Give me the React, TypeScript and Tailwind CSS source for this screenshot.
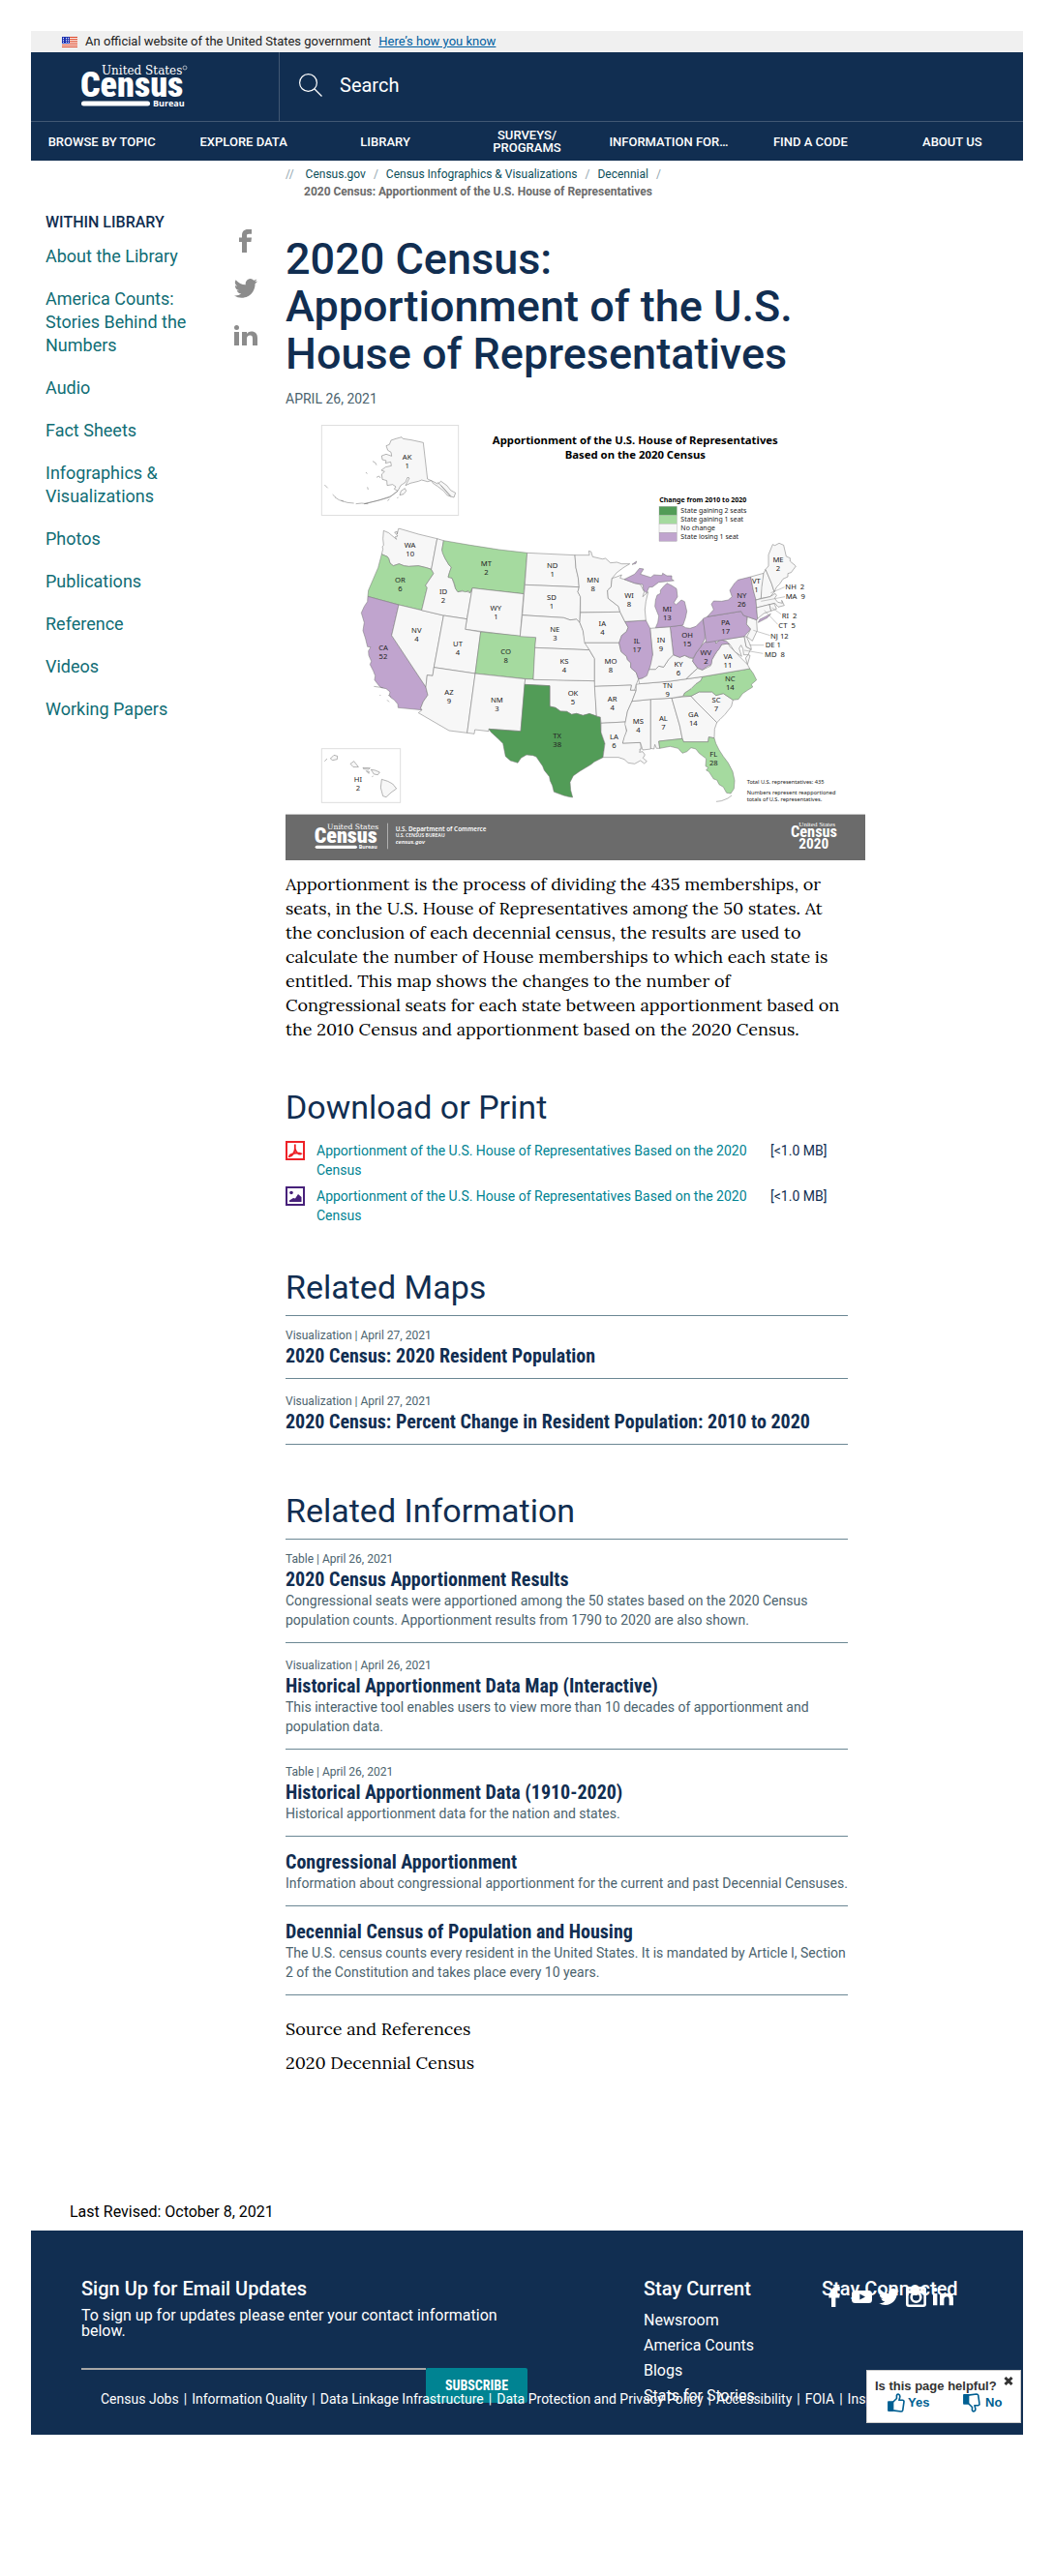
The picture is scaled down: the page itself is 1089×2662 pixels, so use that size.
import type { ReactNode } from "react";

const serif = "font-[Lora,'Liberation_Serif',serif]";
const condensed = "font-['Roboto_Condensed',Roboto,sans-serif]";

const navItems = ["Browse by Topic", "Explore Data", "Library", "Surveys/ Programs", "Information For…", "Find a Code", "About Us"];

const libraryLinks = [
  "About the Library",
  "America Counts: Stories Behind the Numbers",
  "Audio",
  "Fact Sheets",
  "Infographics & Visualizations",
  "Photos",
  "Publications",
  "Reference",
  "Videos",
  "Working Papers",
];

type Entry = { meta?: string; title: string; text?: string };

const relatedMaps: Entry[] = [
  { meta: "Visualization | April 27, 2021", title: "2020 Census: 2020 Resident Population" },
  { meta: "Visualization | April 27, 2021", title: "2020 Census: Percent Change in Resident Population: 2010 to 2020" },
];

const relatedInfo: Entry[] = [
  {
    meta: "Table | April 26, 2021",
    title: "2020 Census Apportionment Results",
    text: "Congressional seats were apportioned among the 50 states based on the 2020 Census population counts. Apportionment results from 1790 to 2020 are also shown.",
  },
  {
    meta: "Visualization | April 26, 2021",
    title: "Historical Apportionment Data Map (Interactive)",
    text: "This interactive tool enables users to view more than 10 decades of apportionment and population data.",
  },
  {
    meta: "Table | April 26, 2021",
    title: "Historical Apportionment Data (1910-2020)",
    text: "Historical apportionment data for the nation and states.",
  },
  {
    title: "Congressional Apportionment",
    text: "Information about congressional apportionment for the current and past Decennial Censuses.",
  },
  {
    title: "Decennial Census of Population and Housing",
    text: "The U.S. census counts every resident in the United States. It is mandated by Article I, Section 2 of the Constitution and takes place every 10 years.",
  },
];

const legalLinks = [
  "Census Jobs",
  "Information Quality",
  "Data Linkage Infrastructure",
  "Data Protection and Privacy Policy",
  "Accessibility",
  "FOIA",
  "Inspector General",
];

function Facebook({ className }: { className: string }) {
  return (
    <svg viewBox="0 0 24 24" className={className} fill="currentColor" aria-hidden="true">
      <path d="M8 24V13H5V8.500h3V6.200C8 2.200 10.300 0 14 0h4v4.800h-2.700C13.200 4.800 13 5.500 13 6.600V8.500h5l-.6 4.500H13v11z" />
    </svg>
  );
}

function Twitter({ className }: { className: string }) {
  return (
    <svg viewBox="0 0 24 24" className={className} fill="currentColor" aria-hidden="true">
      <path d="M24 4.560c-.88.390-1.830.650-2.830.770a4.930 4.930 0 0 0 2.170-2.720c-.95.560-2 .97-3.130 1.190a4.920 4.920 0 0 0-8.390 4.490A13.980 13.980 0 0 1 1.670 3.150a4.920 4.920 0 0 0 1.520 6.570 4.900 4.900 0 0 1-2.230-.61v.06a4.920 4.920 0 0 0 3.950 4.830 4.950 4.950 0 0 1-2.220.08 4.930 4.930 0 0 0 4.600 3.420A9.870 9.870 0 0 1 0 19.540a13.940 13.940 0 0 0 7.550 2.210c9.050 0 14-7.500 14-13.980 0-.21 0-.42-.02-.63A9.940 9.940 0 0 0 24 4.560z" />
    </svg>
  );
}

function LinkedIn({ className }: { className: string }) {
  return (
    <svg viewBox="0 0 24 24" className={className} fill="currentColor" aria-hidden="true">
      <path d="M0 8h5v14H0zM2.500 1a2.500 2.500 0 1 1 0 5 2.500 2.500 0 0 1 0-5zM8 8h5v2c.9-1.500 2.300-2.400 4.700-2.400 4 0 6.300 2.300 6.300 6.800V22h-5v-7c0-2.300-.7-3.400-2.600-3.400C14.200 11.600 13 12.900 13 15.300V22H8z" />
    </svg>
  );
}

function YouTube({ className }: { className: string }) {
  return (
    <svg viewBox="0 0 24 24" className={className} aria-hidden="true">
      <path d="M4 4.500h16q4 0 4 4v7q0 4-4 4H4q-4 0-4-4v-7q0-4 4-4z" fill="currentColor" />
      <path d="M9.500 8.500v7l6.500-3.500z" fill="#112e51" />
    </svg>
  );
}

function Instagram({ className }: { className: string }) {
  return (
    <svg viewBox="0 0 24 24" className={className} fill="none" stroke="currentColor" strokeWidth="3" aria-hidden="true">
      <rect x="1.500" y="1.500" width="21" height="21" rx="2" />
      <circle cx="12" cy="12.500" r="5.500" />
      <path d="M2 6h20" strokeWidth="4" />
    </svg>
  );
}

function Thumb({ className }: { className: string }) {
  return (
    <svg viewBox="0 0 20 22" className={className} fill="none" stroke="#005f92" strokeWidth="1.800" strokeLinejoin="round" aria-hidden="true">
      <path d="M6 10.500 10.500 6V2.500Q11 .8 12.800 1.200 14.600 2 14.200 4.500L13.300 8H17.500Q19.200 8.400 18.800 10.200L17.500 19.500Q17 21 15.500 21L6 19.800z" fill="#fff" />
      <path d="M1 10h5v10H1z" fill="#005f92" />
    </svg>
  );
}

function Flag() {
  return (
    <svg viewBox="0 0 16 11" className="h-[11px] w-4" shapeRendering="crispEdges" aria-hidden="true">
      <rect width="16" height="11" fill="#fff" />
      {[0, 2, 4, 6, 8, 10].map((y) => (
        <rect key={y} y={y} width="16" height="1" fill="#db3e1f" />
      ))}
      <rect width="8" height="7" fill="#1e33b1" />
      {[1, 3, 5].map((y) => (
        <g key={y} fill="#fff">
          <rect x="1" y={y} width="1" height="1" />
          <rect x="4" y={y} width="1" height="1" />
          <rect x="6" y={y} width="1" height="1" />
        </g>
      ))}
    </svg>
  );
}

function CensusLogo() {
  return (
    <svg viewBox="0 0 110 46" className="h-[46px] w-[110px]" fill="#fff" role="img" aria-label="United States Census Bureau">
      <text x="21" y="11" fontSize="12" className="font-['DejaVu_Serif',serif]">United States</text>
      <circle cx="107" cy="4" r="2" fill="none" stroke="#fff" strokeWidth="0.600" />
      <text x="-1" y="34" fontSize="36" className="font-['Roboto_Condensed',Roboto,sans-serif] font-black">Census</text>
      <rect x="0" y="38.500" width="71" height="5" rx="2.500" />
      <text x="74" y="44" fontSize="9" className="font-['Open_Sans',sans-serif] font-bold">Bureau</text>
    </svg>
  );
}

function SectionTitle({ children }: { children: ReactNode }) {
  return <h2 className="text-[34px] leading-[40px] text-[#112e51]">{children}</h2>;
}

function EntryList({ entries }: { entries: Entry[] }) {
  return (
    <ul className="mt-[9px] border-t border-[#6b8794]">
      {entries.map((e) => (
        <li key={e.title} className="border-b border-[#6b8794] pt-[14px] pb-[11px] first:pt-[11px]">
          {e.meta && <p className="text-xs leading-[18px] text-[#4b636e]">{e.meta}</p>}
          <a href="#" className={`${condensed} block text-[20px] leading-6 font-bold text-[#112e51]`}>{e.title}</a>
          {e.text && <p className="-mr-1 pb-0.5 text-sm leading-5 text-[#4b636e]">{e.text}</p>}
        </li>
      ))}
    </ul>
  );
}

const GREEN = "#a5da9f";
const DARK = "#529c57";
const PURPLE = "#c0a4ce";
const NONE = "#f7f7f7";

const states: [string, string][] = [
  [NONE, "322,355 338,362 345,368 362,382 358,374 366,372 356,360 364,358 364,366 368,349 372,349 430,366 488,380 470,475 455,470 430,464 400,466 385,464 370,458 352,464 342,456 338,442 334,436 316,428 320,412 318,405 322,400 320,380"],
  [GREEN, "316,428 334,436 338,442 342,456 352,464 370,458 385,464 400,466 430,464 455,470 470,475 477,488 462,510 452,525 457,532 440,602 369,585 273,559 275,540 290,505 305,470"],
  [PURPLE, "273,559 369,585 347,680 453,840 459,865 445,885 437,905 441,911 367,904 366,893 355,880 344,872 340,865 342,855 330,845 315,842 308,836 294,818 296,805 290,790 280,770 284,760 276,742 275,728 282,716 272,715 266,690 258,665 262,640 253,610 262,590 272,575"],
  [NONE, "369,585 508,618 478,779 474,805 457,803 453,840 347,680"],
  [NONE, "488,380 508,386 503,415 512,440 525,462 532,468 522,498 534,502 545,535 552,545 575,542 590,548 597,533 580,629 508,618 440,602 457,532 452,525 462,510 477,488 470,475"],
  [GREEN, "508,386 590,400 680,414 767,424 756,551 597,533 590,548 585,542 575,545 565,541 552,545 545,535 541,518 534,502 522,500 526,485 532,468 525,462 512,440 505,425 503,415"],
  [NONE, "597,533 756,551 745,683 575,661"],
  [NONE, "508,618 580,629 575,661 623,669 606,798 478,779"],
  [GREEN, "623,669 794,686 786,817 606,798"],
  [NONE, "478,779 606,798 581,982 525,975 430,920 441,911 437,905 445,885 459,865 453,840 457,803 474,805"],
  [NONE, "606,798 761,815 747,977 648,970 648,977 605,972 603,985 581,982"],
  [NONE, "761,815 976,821 982,930 960,924 940,928 920,922 905,925 890,916 870,915 855,904 837,900 837,836 759,832"],
  [DARK, "759,832 837,836 837,900 855,904 870,915 890,916 905,925 920,922 940,928 960,922 982,930 994,933 996,980 1008,1015 1002,1058 975,1072 965,1080 930,1101 910,1115 900,1135 902,1160 908,1182 895,1180 880,1176 850,1165 845,1145 838,1130 836,1118 820,1098 815,1085 795,1056 785,1052 765,1050 748,1060 738,1075 715,1068 700,1055 692,1015 675,998 655,980 648,970 747,977"],
  [NONE, "767,424 915,431 918,470 925,500 928,530 760,523"],
  [NONE, "760,523 928,530 924,545 932,560 930,640 920,630 900,632 880,625 752,617"],
  [NONE, "752,617 880,625 900,632 920,630 930,640 940,665 947,700 960,725 791,718 794,686 745,683"],
  [NONE, "791,718 960,725 968,740 976,752 976,821 786,817"],
  [NONE, "915,431 960,431 958,418 965,420 970,436 1000,443 1010,441 1025,455 1045,453 1060,458 1085,458 1065,470 1045,485 1030,503 1027,530 1016,540 1018,565 1050,590 1055,607 932,609 932,560 924,545 928,530 925,500 918,470"],
  [NONE, "932,609 1055,607 1070,637 1080,655 1075,668 1060,680 1052,703 945,703 940,665 930,640"],
  [NONE, "945,703 1052,703 1058,730 1075,745 1078,755 1088,765 1088,780 1105,795 1112,815 1105,832 1100,850 1087,850 1090,834 976,838 976,752 960,725"],
  [NONE, "976,838 1090,834 1087,850 1105,850 1092,884 1078,915 1072,948 996,952 994,933 982,930"],
  [NONE, "996,952 1072,948 1075,980 1063,1014 1118,1012 1120,1030 1115,1042 1125,1040 1132,1050 1126,1060 1138,1070 1130,1077 1118,1068 1100,1078 1080,1075 1068,1064 1050,1058 1002,1058 1008,1015 996,980"],
  [NONE, "1092,884 1150,878 1150,1032 1125,1035 1118,1012 1063,1014 1068,995 1076,975 1070,955 1078,915"],
  [NONE, "1150,878 1215,874 1240,960 1248,1000 1175,1008 1178,1030 1168,1030 1163,1018 1160,1032 1150,1030"],
  [NONE, "1215,874 1275,868 1290,885 1320,915 1345,940 1355,950 1348,970 1347,998 1330,995 1328,1010 1252,1010 1248,1000 1240,960"],
  [GREEN, "1175,1008 1248,1000 1252,1010 1328,1010 1330,995 1347,998 1352,1015 1362,1035 1375,1055 1390,1075 1404,1102 1410,1130 1408,1155 1398,1170 1385,1168 1375,1150 1362,1142 1355,1128 1345,1125 1330,1102 1322,1098 1328,1090 1320,1085 1322,1062 1300,1045 1290,1032 1275,1028 1262,1040 1248,1045 1235,1030 1210,1024 1178,1030"],
  [NONE, "1275,868 1300,855 1340,855 1352,866 1375,860 1405,880 1400,900 1380,925 1365,940 1355,950 1345,940 1320,915 1290,885"],
  [GREEN, "1310,808 1457,783 1468,798 1478,818 1462,832 1466,840 1450,850 1435,860 1422,878 1405,880 1375,860 1352,866 1340,855 1300,855 1275,868 1250,868 1255,858 1275,845 1290,830 1305,820"],
  [NONE, "1105,832 1115,830 1210,822 1310,808 1305,820 1290,830 1275,845 1255,858 1250,868 1215,874 1150,878 1092,884 1105,850"],
  [NONE, "1112,815 1125,812 1130,800 1145,785 1165,785 1175,775 1190,778 1205,755 1220,740 1240,748 1255,742 1270,750 1282,752 1280,760 1295,782 1280,795 1260,815 1210,822 1115,830"],
  [NONE, "1260,815 1295,782 1310,787 1335,775 1340,755 1355,730 1370,708 1390,705 1395,715 1412,730 1425,745 1440,760 1450,770 1457,783 1310,808"],
  [PURPLE, "1282,752 1290,735 1305,715 1318,700 1350,697 1352,705 1365,692 1385,698 1395,707 1385,706 1370,708 1362,722 1355,730 1348,740 1340,755 1338,770 1325,776 1310,787 1295,780 1280,760"],
  [NONE, "1352,697 1440,683 1446,715 1460,722 1452,740 1438,740 1436,722 1430,710 1424,720 1432,745 1410,730 1395,707 1385,698 1365,692 1352,705"],
  [NONE, "1440,683 1447,684 1460,712 1462,724 1446,715"],
  [NONE, "1452,740 1458,742 1450,770 1444,750"],
  [PURPLE, "1210,653 1245,648 1258,656 1272,658 1290,652 1312,630 1318,665 1318,690 1305,715 1290,735 1282,750 1270,748 1255,742 1240,748 1220,740"],
  [NONE, "1148,658 1210,653 1220,740 1205,755 1190,778 1175,775 1165,785 1145,785 1150,750 1156,740"],
  [PURPLE, "1070,637 1135,633 1148,658 1156,740 1150,770 1145,785 1138,805 1125,812 1112,815 1105,795 1088,780 1088,765 1078,755 1075,745 1058,730 1052,703 1060,680 1075,668 1080,655"],
  [NONE, "1030,503 1045,498 1060,492 1055,502 1068,506 1100,518 1118,522 1130,545 1125,560 1142,545 1135,575 1132,600 1135,633 1070,637 1055,607 1050,590 1018,565 1016,540 1027,530"],
  [PURPLE, "1068,506 1100,490 1115,472 1128,474 1118,490 1150,500 1160,492 1185,494 1187,487 1200,495 1215,495 1215,506 1222,510 1195,513 1175,515 1155,530 1145,530 1137,548 1128,540 1125,522 1100,518"],
  [PURPLE, "1190,528 1200,518 1215,525 1230,535 1233,560 1222,578 1228,585 1245,570 1255,575 1262,605 1258,625 1250,648 1210,653 1165,656 1172,640 1175,620 1163,590 1165,570 1170,555 1180,550 1180,540"],
  [PURPLE, "1092,460 1106,450 1104,457"],
  [PURPLE, "1312,628 1325,622 1430,605 1438,618 1450,622 1447,645 1460,660 1440,683 1322,702"],
  [NONE, "1450,622 1478,632 1480,665 1465,697 1448,684 1460,660 1447,645"],
  [PURPLE, "1325,622 1345,600 1338,583 1345,573 1370,574 1390,570 1402,560 1395,540 1410,518 1420,508 1460,498 1468,540 1476,565 1478,594 1481,628 1479,632 1450,622 1438,618 1430,605"],
  [PURPLE, "1483,640 1488,630 1505,622 1522,613 1512,625"],
  [NONE, "1460,498 1500,487 1500,500 1492,565 1476,570 1468,540"],
  [NONE, "1500,487 1506,475 1525,520 1533,545 1520,560 1492,565 1494,530"],
  [NONE, "1506,475 1515,465 1515,430 1528,398 1535,401 1548,394 1562,400 1570,435 1582,440 1582,450 1600,465 1585,485 1575,488 1575,498 1560,505 1550,520 1540,530 1533,545 1525,520"],
  [NONE, "1476,570 1520,560 1536,550 1540,556 1534,565 1544,577 1558,580 1556,571 1564,587 1545,592 1535,580 1478,594"],
  [NONE, "1478,594 1518,584 1523,604 1500,612 1481,628"],
  [NONE, "1518,584 1533,581 1540,598 1523,604"],
  [NONE, "345,75 360,70 378,65 382,70 408,74 445,82 458,195 470,200 458,203 440,198 430,202 405,208 390,215 402,192 396,190 390,205 375,215 366,232 355,226 360,219 350,212 333,215 332,200 318,196 316,180 325,172 315,168 328,158 346,154 344,142 328,146 330,138 318,135 316,123 330,118 347,124 345,112 335,106 330,92 340,88"],
  [NONE, "470,200 490,210 500,202 518,215 530,230 545,238 540,252 520,246 508,232 490,218 475,208"],
  [NONE, "372,245 376,232 388,224 392,232 384,242"],
  [NONE, "366,232 345,248 310,260 262,272 300,263 340,252"],
  [NONE, "157,1062 168,1051 179,1054 178,1064 164,1067"],
  [NONE, "219,1078 230,1070 238,1080 244,1088 228,1088"],
  [NONE, "258,1090 280,1091 276,1095 260,1094"],
  [NONE, "268,1100 277,1102 276,1108"],
  [NONE, "283,1096 296,1098 310,1104 304,1112 292,1110"],
  [NONE, "316,1126 335,1132 350,1140 362,1155 345,1167 330,1181 320,1178 313,1152"],
];

const labels: [string, string, number, number][] = [
  ["AK", "1", 395, 126], ["WA", "10", 404, 400], ["OR", "6", 373, 507], ["ID", "2", 507, 543], ["MT", "2", 640, 456],
  ["ND", "1", 845, 464], ["SD", "1", 843, 561], ["MN", "8", 971, 507], ["WY", "1", 670, 594], ["NE", "3", 853, 661],
  ["IA", "4", 1000, 644], ["NV", "4", 424, 664], ["UT", "4", 552, 706], ["CA", "52", 321, 717], ["CO", "8", 701, 729],
  ["KS", "4", 882, 761], ["AZ", "9", 525, 857], ["NM", "3", 673, 879], ["OK", "5", 909, 858], ["TX", "38", 860, 990],
  ["HI", "2", 243, 1127], ["MO", "8", 1026, 760], ["AR", "4", 1031, 877], ["LA", "6", 1036, 993], ["MS", "4", 1111, 946],
  ["AL", "7", 1189, 936], ["GA", "14", 1282, 925], ["FL", "28", 1345, 1049], ["SC", "7", 1353, 879], ["NC", "14", 1396, 814],
  ["TN", "9", 1202, 834], ["KY", "6", 1236, 769], ["VA", "11", 1389, 745], ["WV", "2", 1321, 734], ["OH", "15", 1263, 678],
  ["IN", "9", 1182, 695], ["IL", "17", 1107, 697], ["WI", "8", 1083, 555], ["MI", "13", 1201, 598], ["PA", "17", 1382, 641],
  ["NY", "26", 1432, 556], ["VT", "1", 1477, 510], ["ME", "2", 1545, 446],
];

const sideLabels: [string, number, number][] = [
  ["NH  2", 1567, 528], ["MA  9", 1568, 558], ["RI  2", 1556, 618], ["CT  5", 1546, 649], ["NJ 12", 1521, 681], ["DE 1", 1505, 710], ["MD  8", 1503, 739],
];

const legend: [string, string][] = [
  [DARK, "State gaining 2 seats"],
  [GREEN, "State gaining 1 seat"],
  [NONE, "No change"],
  [PURPLE, "State losing 1 seat"],
];

function ApportionmentMap() {
  return (
    <svg viewBox="18 27 1797 1350" className="block w-full font-['Noto_Sans',sans-serif]" role="img" aria-label="Apportionment of the U.S. House of Representatives Based on the 2020 Census">
      <g fill="none" stroke="#dedede" strokeWidth="3">
        <rect x="130" y="28.500" width="424" height="279" />
        <rect x="130" y="1031" width="244" height="167" />
      </g>
      <g stroke="#777" strokeWidth="1.600" strokeLinejoin="round">
        {states.map(([fill, points]) => (
          <polygon key={points} points={points} fill={fill} />
        ))}
        <path
          d="M288 140l8 4 4 8M267 174l4 5M272 220l2 8M139 213l10 10M164 243l10 10M172 252l12 8 14 4M190 262l20 6 20 2M236 272l18-2 20 2M300 190l8-4 4 6M490 205l40 42M500 215l30 35M364 255l4-4M334 262l6-4M139 1070l8-8M286 1118l4-2M292 838l28 4M310 864l3 3M333 880l6 6M336 865l8 4M1353 1195l16-2 20-8 12-9M1120 1030l-6 5"
          fill="none"
        />
        <path
          d="M1522 548l43-18M1492 574l74-14M1526 594l28 20M1502 602l42 44M1468 664l52 16M1456 710l45 0M1440 726l58 10"
          fill="none"
          stroke="#999"
        />
      </g>
      <g fill="#222" fontSize="23" textAnchor="middle">
        {labels.map(([name, seats, x, y]) => (
          <g key={name}>
            <text x={x} y={y + 8}>{name}</text>
            <text x={x} y={y + 35}>{seats}</text>
          </g>
        ))}
      </g>
      <g fill="#222" fontSize="23">
        {sideLabels.map(([t, x, y]) => (
          <text key={t} x={x} y={y + 8} xmlSpace="preserve">{t}</text>
        ))}
      </g>
      <g fontWeight="700" fontSize="34" textAnchor="middle">
        <text x="1102" y="86">Apportionment of the U.S. House of Representatives</text>
        <text x="1102" y="132">Based on the 2020 Census</text>
      </g>
      <text x="1177" y="266" fontWeight="700" fontSize="21">Change from 2010 to 2020</text>
      {legend.map(([fill, t], i) => (
        <g key={t}>
          <rect x="1176" y={280 + i * 27} width="55" height="27" fill={fill} stroke="#999" />
          <text x="1243" y={301 + i * 27} fontSize="21" fill="#222">{t}</text>
        </g>
      ))}
      <g fontSize="17" fill="#222">
        <text x="1448" y="1140">Total U.S. representatives: 435</text>
        <text x="1448" y="1174">Numbers represent reapportioned</text>
        <text x="1448" y="1195">totals of U.S. representatives.</text>
      </g>
      <rect x="18" y="1235" width="1797" height="142" fill="#6b6b6b" />
      <rect x="18" y="1233" width="1797" height="3" fill="#c4c4c4" />
      <g fill="#fff">
        <text x="147" y="1280" fontSize="23" className="font-['DejaVu_Serif',serif]">United States</text>
        <text x="107" y="1322" fontSize="66" className="font-['Roboto_Condensed',Roboto,sans-serif] font-black">Census</text>
        <rect x="110" y="1331" width="130" height="10" rx="5" />
        <text x="245" y="1342" fontSize="16" fontWeight="700">Bureau</text>
        <rect x="334" y="1262" width="2" height="80" opacity="0.700" />
        <text x="359" y="1286" fontSize="19" fontWeight="600">U.S. Department of Commerce</text>
        <text x="359" y="1306" fontSize="15" fontWeight="600">U.S. CENSUS BUREAU</text>
        <text x="359" y="1327" fontSize="18" fontWeight="600" fontStyle="italic">census.gov</text>
        <text x="1609" y="1272" fontSize="21" className="font-['Liberation_Serif',serif]">United States</text>
        <text x="1584" y="1304" fontSize="49" className="font-['Roboto_Condensed',Roboto,sans-serif] font-bold">Census</text>
        <text x="1609" y="1341" fontSize="46" className="font-['Roboto_Condensed',Roboto,sans-serif] font-bold">2020</text>
      </g>
    </svg>
  );
}

function PdfIcon() {
  return (
    <svg viewBox="0 0 20 20" className="h-5 w-5 shrink-0" fill="none" stroke="#ee2127" aria-hidden="true">
      <rect x="1" y="1" width="18" height="18" strokeWidth="2" />
      <path d="M9.800 3.500v4.500c0 3.500-2.500 7.500-5.800 8 .5-2.800 8.500-4.600 12-2.800-2.500 1.600-5.600-2.200-6.200-5.200" strokeWidth="1.800" />
    </svg>
  );
}

function ImageIcon() {
  return (
    <svg viewBox="0 0 20 20" className="h-5 w-5 shrink-0" aria-hidden="true">
      <rect x="1" y="1" width="18" height="18" fill="#fff" stroke="#47217a" strokeWidth="2" />
      <circle cx="6" cy="6.500" r="1.800" fill="#47217a" />
      <path d="M4 16v-1.500L8 12l2 .5L13 8l3.500 3v5z" fill="#47217a" />
    </svg>
  );
}

export default function App() {
  return (
    <div className="bg-white px-8 pt-8 pb-36 font-[Roboto,sans-serif]">
      <div className="flex h-[22px] items-center bg-[#f0f0f0] pl-8 text-[13px] text-[#1b1b1b]">
        <Flag />
        <span className="ml-2">An official website of the United States government</span>
        <a href="#" className="ml-2 text-[#005ea2] underline">Here’s how you know</a>
      </div>

      <header className="bg-[#112e51] text-white">
        <div className="flex h-[72px] border-b border-[#415873]">
          <a href="#" className="w-[257px] border-r border-[#415873] pt-3 pl-[52px]">
            <CensusLogo />
          </a>
          <label className="flex flex-1 items-center gap-[18px] pb-1 pl-5">
            <svg viewBox="0 0 24 24" className="h-6 w-6" fill="none" stroke="#fff" strokeWidth="1.200" aria-hidden="true">
              <circle cx="9.500" cy="9.500" r="8.900" />
              <path d="M16 16l7.500 7.500" />
            </svg>
            <input type="text" aria-label="Search" placeholder="Search" className="min-w-0 flex-1 bg-transparent text-[20px] outline-none placeholder:text-white" />
          </label>
        </div>
        <nav className="grid h-10 grid-cols-7 items-center text-center text-[13px] leading-[13px] font-medium uppercase">
          {navItems.map((n) => (
            <a key={n} href="#" className="px-6 [&:not(:nth-child(4))]:px-0">{n}</a>
          ))}
        </nav>
      </header>

      <div className="flex">
        <aside className="w-[210px] shrink-0 pt-[54px] pl-[15px]">
          <h2 className="text-base leading-5 font-medium text-[#112e51]">WITHIN LIBRARY</h2>
          <ul className="mt-[13px] flex w-[160px] flex-col gap-5 text-[18px] leading-6 text-[#0f6d75]">
            {libraryLinks.map((l) => (
              <li key={l}>
                <a href="#">{l}</a>
              </li>
            ))}
          </ul>
        </aside>
        <div className="flex w-[53px] shrink-0 flex-col gap-[25px] pt-[71px] text-[#8c8c8c]">
          <a href="#" aria-label="Facebook"><Facebook className="h-6 w-6" /></a>
          <a href="#" aria-label="Twitter"><Twitter className="h-6 w-6" /></a>
          <a href="#" aria-label="LinkedIn"><LinkedIn className="h-6 w-6" /></a>
        </div>

        <main className="w-[581px] pt-[5px]">
          <nav className="text-xs leading-[18px] text-[#112e51]" aria-label="Breadcrumb">
            <div className="flex gap-2 text-[#90a4ae]">
              <span className="mr-1">//</span>
              <a href="#" className="text-[#0b4e59]">Census.gov</a>
              <span>/</span>
              <a href="#" className="text-[#0b4e59]">Census Infographics &amp; Visualizations</a>
              <span>/</span>
              <a href="#" className="text-[#0b4e59]">Decennial</a>
              <span>/</span>
            </div>
            <p className="pl-[19px] font-bold text-[#6b6b6b]">2020 Census: Apportionment of the U.S. House of Representatives</p>
          </nav>
          <h1 className="mt-9 max-w-[560px] text-[45px] leading-[49px] font-medium text-[#112e51]">
            2020 Census: Apportionment of the U.S. House of Representatives
          </h1>
          <p className="mt-3 text-sm leading-5 text-[#4b636e]">APRIL 26, 2021</p>
          <figure className="mt-[17px] w-[599px]">
            <ApportionmentMap />
          </figure>
          <p className={`${serif} mt-[12px] text-[18px] leading-[25px] text-black`}>
            Apportionment is the process of dividing the 435 memberships, or seats, in the U.S. House of Representatives among the 50 states. At the conclusion of each decennial census, the results are used to calculate the number of House memberships to which each state is entitled. This map shows the changes to the number of Congressional seats for each state between apportionment based on the 2010 Census and apportionment based on the 2020 Census.
          </p>

          <section className="mt-12">
            <SectionTitle>Download or Print</SectionTitle>
            <ul className="mt-[15px] flex flex-col gap-[7px] text-sm leading-5">
              {[<PdfIcon key="pdf" />, <ImageIcon key="image" />].map((icon, i) => (
                <li key={i} className="flex">
                  {icon}
                  <a href="#" className="ml-3 w-[469px] pr-4 text-[#008392]">
                    Apportionment of the U.S. House of Representatives Based on the 2020 Census
                  </a>
                  <span className="text-[#112e51]">[&lt;1.0 MB]</span>
                </li>
              ))}
            </ul>
          </section>

          <section className="mt-11">
            <SectionTitle>Related Maps</SectionTitle>
            <EntryList entries={relatedMaps} />
          </section>

          <section className="mt-12">
            <SectionTitle>Related Information</SectionTitle>
            <EntryList entries={relatedInfo} />
          </section>

          <div className={`${serif} mt-[22px] flex flex-col gap-[10px] text-[18px] leading-[25px] text-black`}>
            <p>Source and References</p>
            <p>2020 Decennial Census</p>
          </div>
        </main>
      </div>

      <p className="mt-[132px] mb-[9px] pl-10 text-base leading-5 text-black">Last Revised: October 8, 2021</p>

      <footer className="relative bg-[#112e51] pb-[27px] text-white">
        <div className="flex pt-[48px] pl-[52px]">
          <section className="w-[462px]">
            <h2 className="text-[20px] leading-6 font-medium">Sign Up for Email Updates</h2>
            <p className="mt-2 w-[450px] text-base leading-4">To sign up for updates please enter your contact information below.</p>
            <form className="mt-[22px] flex items-start">
              <input type="email" aria-label="Email address" className="h-[10px] w-[356px] border-b-2 border-[#a6a6a6] bg-transparent outline-none" />
              <button type="button" className={`${condensed} mt-2 h-9 w-[105px] rounded-[2px] bg-[#008392] text-sm font-bold`}>SUBSCRIBE</button>
            </form>
          </section>
          <section className="ml-[119px] w-[184px]">
            <h2 className="text-[20px] leading-6 font-medium">Stay Current</h2>
            <ul className="mt-2 text-base leading-[26px]">
              {["Newsroom", "America Counts", "Blogs", "Stats for Stories"].map((l) => (
                <li key={l}><a href="#">{l}</a></li>
              ))}
            </ul>
          </section>
          <section>
            <h2 className="text-[20px] leading-6 font-medium">Stay Connected</h2>
            <div className="-mt-[14px] flex gap-[7px] pl-[3px]">
              <a href="#" aria-label="Facebook"><Facebook className="h-[21px] w-[21px]" /></a>
              <a href="#" aria-label="YouTube"><YouTube className="h-[21px] w-[21px]" /></a>
              <a href="#" aria-label="Twitter"><Twitter className="h-[21px] w-[21px]" /></a>
              <a href="#" aria-label="Instagram"><Instagram className="h-[21px] w-[21px]" /></a>
              <a href="#" aria-label="LinkedIn"><LinkedIn className="h-[21px] w-[21px]" /></a>
            </div>
          </section>
        </div>

        <nav className="absolute bottom-[27px] left-[72px] flex text-sm leading-5 whitespace-nowrap" aria-label="Legal">
          {legalLinks.map((l, i) => (
            <span key={l}>
              {i > 0 && <span className="px-[5px]">|</span>}
              <a href="#">{l}</a>
            </span>
          ))}
        </nav>

        <div className="absolute right-[2px] bottom-3 h-[55px] w-40 border border-[#ccc] bg-white pt-2 pl-2 font-['Liberation_Sans',sans-serif] text-[13px] leading-4 font-bold text-[#333]">
          <p>Is this page helpful?</p>
          <button type="button" aria-label="Close" className="absolute top-[6px] right-[7px]">
            <svg viewBox="0 0 10 9" className="h-[9px] w-[10px]" fill="none" stroke="#333" strokeWidth="3" aria-hidden="true">
              <path d="M1.500 1 8.500 8M8.500 1 1.500 8" />
            </svg>
          </button>
          <div className="-mt-px flex text-[#005f92]">
            <button type="button" className="ml-[13px] flex w-[78px] items-center gap-[3px]">
              <Thumb className="h-5 w-[18px]" />
              Yes
            </button>
            <button type="button" className="flex items-center gap-[5px]">
              <Thumb className="h-5 w-[18px] -scale-y-100" />
              No
            </button>
          </div>
        </div>
      </footer>
    </div>
  );
}
